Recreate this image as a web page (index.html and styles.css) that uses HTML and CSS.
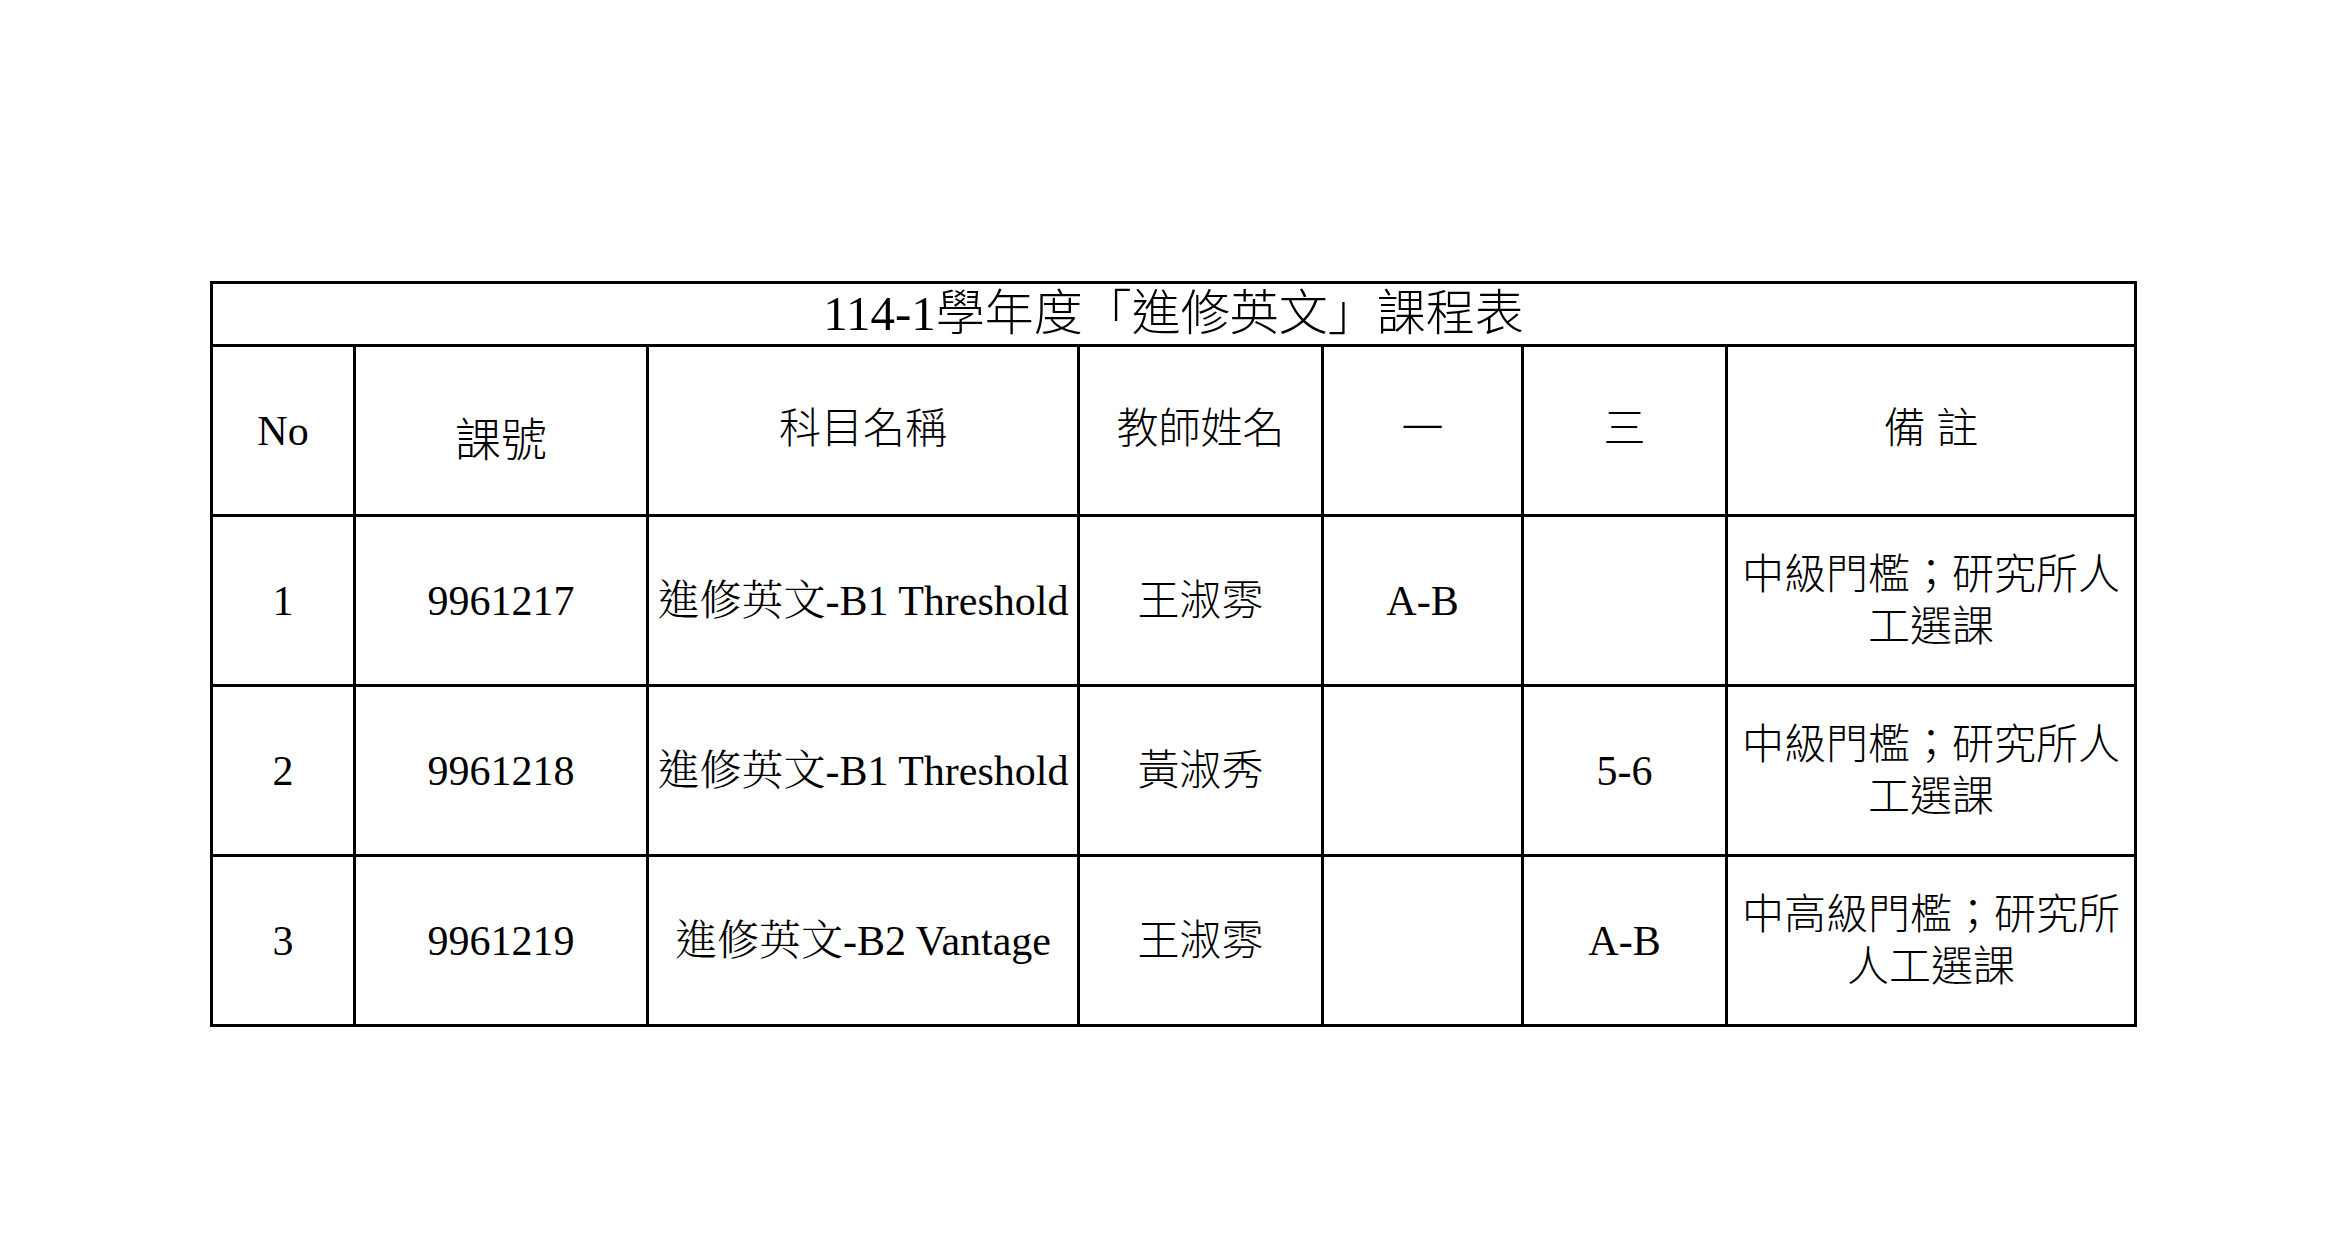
FILE: index.html
```html
<!DOCTYPE html>
<html lang="zh-Hant">
<head>
<meta charset="utf-8">
<title>114-1學年度「進修英文」課程表</title>
<link rel="stylesheet" href="styles.css">
</head>
<body>
<div class="page">
  <table class="schedule">
    <colgroup>
      <col class="c-no">
      <col class="c-code">
      <col class="c-name">
      <col class="c-teacher">
      <col class="c-mon">
      <col class="c-wed">
      <col class="c-note">
    </colgroup>
    <tr class="title-row">
      <td colspan="7" class="title">114-1學年度「進修英文」課程表</td>
    </tr>
    <tr class="head-row">
      <td class="head">No</td>
      <td class="head big">課號</td>
      <td class="head up">科目名稱</td>
      <td class="head up">教師姓名</td>
      <td class="head up">一</td>
      <td class="head up">三</td>
      <td class="head up">備 註</td>
    </tr>
    <tr class="row">
      <td>1</td>
      <td>9961217</td>
      <td class="subject">進修英文-B1 Threshold</td>
      <td class="name">王淑雰</td>
      <td>A-B</td>
      <td></td>
      <td class="note">中級門檻；研究所人工選課</td>
    </tr>
    <tr class="row">
      <td>2</td>
      <td>9961218</td>
      <td class="subject">進修英文-B1 Threshold</td>
      <td class="name">黃淑秀</td>
      <td></td>
      <td>5-6</td>
      <td class="note">中級門檻；研究所人工選課</td>
    </tr>
    <tr class="row">
      <td>3</td>
      <td>9961219</td>
      <td class="subject">進修英文-B2 Vantage</td>
      <td class="name">王淑雰</td>
      <td></td>
      <td>A-B</td>
      <td class="note">中高級門檻；研究所人工選課</td>
    </tr>
  </table>
</div>
</body>
</html>
```
FILE: styles.css
```css
html, body {
  margin: 0;
  padding: 0;
  background: #ffffff;
}

.page {
  padding: 281px 0 0 210px;
}

.schedule {
  border-collapse: collapse;
  table-layout: fixed;
  width: 1924px;
  color: #000;
  font-family: "Liberation Serif", "Noto Sans CJK TC", sans-serif;
  font-weight: 300;
  font-size: 42px;
}

.c-no { width: 143px; }
.c-code { width: 293px; }
.c-name { width: 431px; }
.c-teacher { width: 244px; }
.c-mon { width: 200px; }
.c-wed { width: 204px; }
.c-note { width: 409px; }

.schedule td {
  border: 3px solid #000;
  text-align: center;
  vertical-align: middle;
  padding: 0 8px;
  line-height: 52px;
}

.title-row { height: 63px; }
.head-row { height: 170px; }
.row { height: 170px; }

.title {
  font-size: 49px;
  line-height: 56px;
}

.head {
  padding-top: 10px;
}

.head.big {
  font-size: 46px;
  padding-top: 20px;
}

.head.up {
  padding-top: 0;
  padding-bottom: 4px;
}

.name {
  padding-bottom: 12px;
}

.subject {
  font-family: "Liberation Serif", "Noto Serif CJK TC", "Noto Sans CJK TC", serif;
  padding: 26px 0 0 0;
  white-space: nowrap;
}

.note {
  padding-bottom: 26px;
}
```
